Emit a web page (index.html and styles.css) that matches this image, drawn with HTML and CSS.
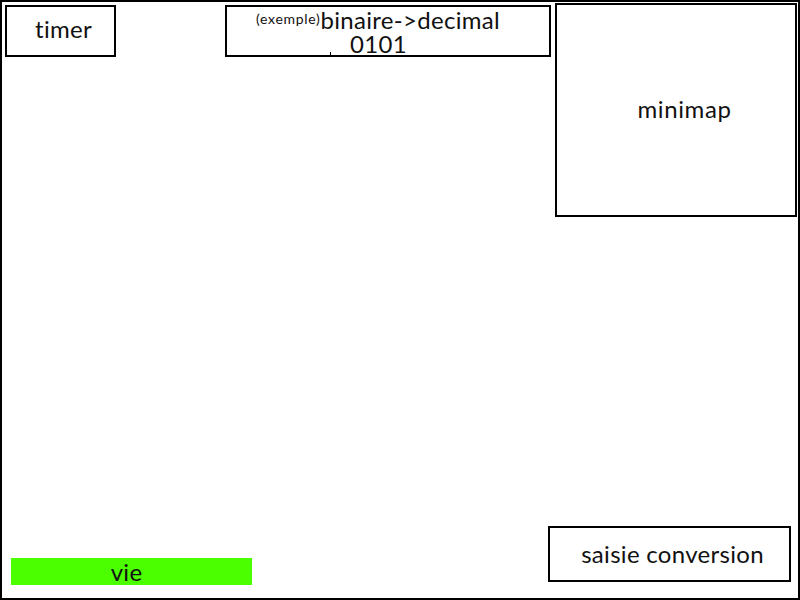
FILE: index.html
```html
<!DOCTYPE html>
<html lang="fr">
<head>
    <meta charset="UTF-8">
    <title>jeu conversion</title>
    <link rel="stylesheet" href="styles.css">
</head>
<body>
    <div class="screen">
        <div class="top">
            <div class="box timer">timer</div>
            <div class="box question">
                <div class="line"><span class="hint">(exemple)</span>binaire-&gt;decimal</div>
                <div class="line value"><span class="tick"></span>0101</div>
            </div>
            <div class="box minimap">minimap</div>
        </div>
        <div class="bottom">
            <div class="life">vie</div>
            <div class="box answer">saisie conversion</div>
        </div>
    </div>
</body>
</html>
```

FILE: styles.css
```css
body {
    margin: 0;
    font-family: 'Lato', sans-serif;
    color: #111;
    background: #fff;
}

.screen {
    width: 800px;
    height: 600px;
    box-sizing: border-box;
    border: 2px solid #000;
    display: flex;
    flex-direction: column;
    justify-content: space-between;
}

.top {
    display: flex;
    align-items: flex-start;
    padding: 0 1px 0 3px;
}

.box {
    border: 2px solid #000;
    box-sizing: border-box;
    display: flex;
    align-items: center;
    justify-content: center;
    font-size: 24px;
    letter-spacing: 0.3px;
}

.timer {
    width: 111px;
    height: 52px;
    margin-top: 3px;
    padding-left: 6px;
    padding-bottom: 5px;
}

.question {
    width: 326px;
    height: 52px;
    margin-top: 3px;
    margin-left: 109px;
    flex-direction: column;
    align-items: flex-start;
    padding-left: 29px;
    line-height: 24px;
}

.hint {
    font-size: 14px;
    letter-spacing: 0.7px;
    vertical-align: 5px;
}

.value {
    margin-left: 74px;
}

.tick {
    display: inline-block;
    width: 1px;
    height: 4px;
    background: #000;
    margin-right: 19px;
    vertical-align: -3px;
}

.minimap {
    width: 242px;
    height: 214px;
    margin-top: 1px;
    margin-left: auto;
    padding-left: 17px;
    padding-bottom: 4px;
    letter-spacing: 0.6px;
}

.bottom {
    display: flex;
    align-items: flex-end;
    justify-content: space-between;
    padding: 0 7px 0 9px;
}

.life {
    width: 241px;
    height: 27px;
    margin-bottom: 13px;
    padding-right: 10px;
    box-sizing: border-box;
    background: #4cff00;
    text-align: center;
    font-size: 24px;
    letter-spacing: 0.3px;
    line-height: 27px;
}

.answer {
    width: 243px;
    height: 56px;
    margin-bottom: 16px;
    padding-left: 6px;
    padding-bottom: 2px;
}
```
